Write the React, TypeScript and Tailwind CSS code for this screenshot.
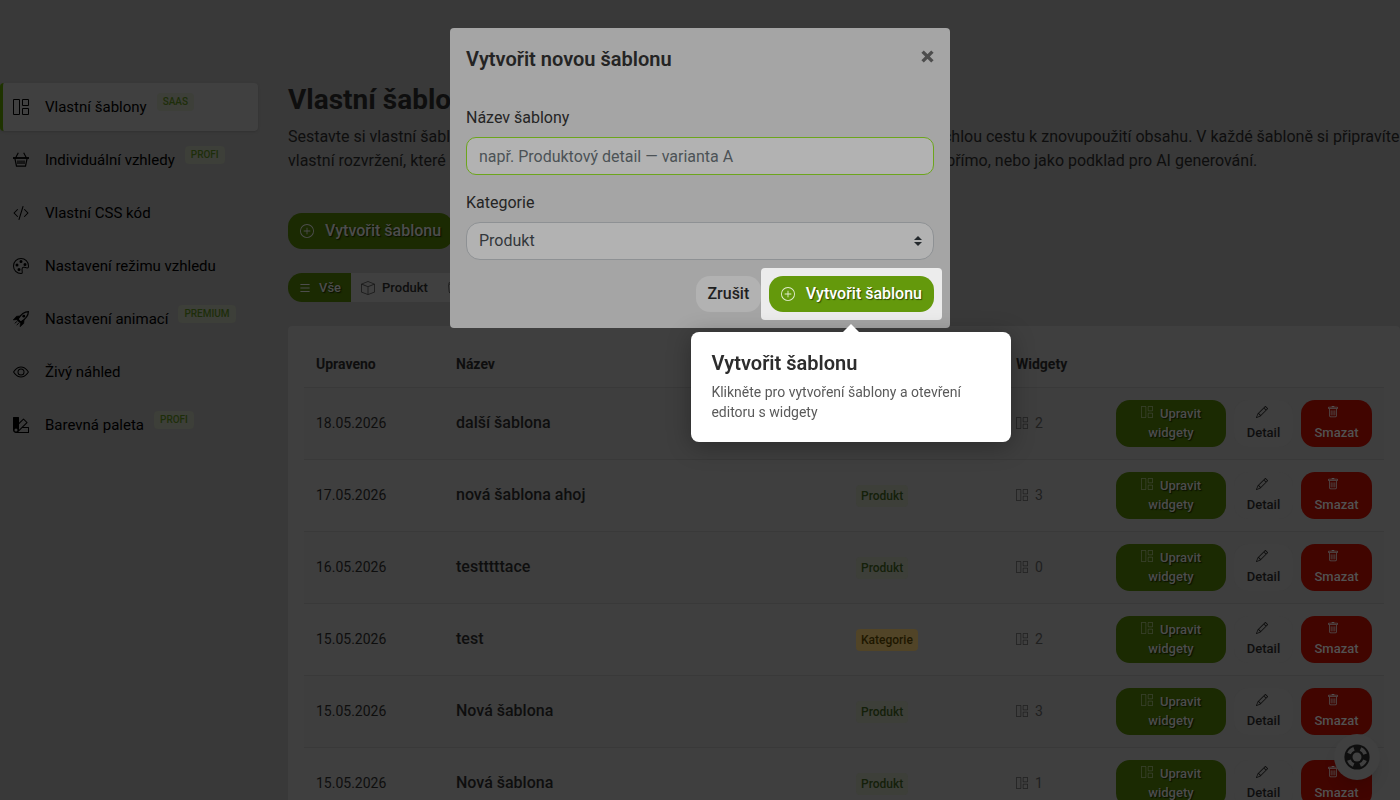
import type { ReactNode } from "react";
import {
  BsBox,
  BsCodeSlash,
  BsEye,
  BsFolder,
  BsGrid1X2,
  BsList,
  BsPalette,
  BsPalette2,
  BsPencil,
  BsPlusCircle,
  BsTrash,
} from "react-icons/bs";

type MenuItem = {
  label: string;
  icon: ReactNode;
  badge?: string;
  active?: boolean;
};

type Template = {
  date: string;
  name: string;
  type: "Produkt" | "Kategorie";
  widgets: number;
};

function BasketIcon() {
  return (
    <svg viewBox="0 0 16 16" className="w-4 h-4" fill="none" stroke="currentColor">
      <path d="M5.300.8 2.800 5.500M10.700.8l2.500 4.700" strokeWidth="1.100" />
      <path d="M0 6h16" strokeWidth="1.800" />
      <path d="M1.900 6.500l1.600 7.700h9l1.600-7.700" strokeWidth="1.200" />
      <path d="M5 8.500v3.500M7 8.500v3.500M9 8.500v3.500M11 8.500v3.500" strokeWidth="1.200" />
    </svg>
  );
}

function RocketIcon() {
  return (
    <svg viewBox="0 0 16 16" className="w-4 h-4" fill="none" stroke="currentColor">
      <path d="M15.400.6C11.400.6 8.300 2.600 4.900 8.200l2.900 2.900C13.400 7.700 15.400 4.600 15.400.6z" strokeWidth="1.200" />
      <circle cx="10.800" cy="5.200" r="1.400" fill="currentColor" stroke="none" />
      <path d="M6.800 4.900 3.500 5.300.2 8.900l4.700-.5zM11.100 9.200l-.4 3.300-3.600 3.300.5-4.700z" fill="currentColor" strokeWidth=".6" />
      <path d="M4.900 8.200l2.900 2.900-1 1-2.900-2.900z" fill="currentColor" stroke="none" />
      <path d="M3.900 10.300 2 12.300M5.800 12.200l-2.100 1.800" />
    </svg>
  );
}

function LifebuoyIcon() {
  return (
    <svg viewBox="0 0 26 26" className="w-[26px] h-[26px]" fill="none">
      <circle cx="13" cy="13" r="12.600" fill="#0e0e0e" />
      <circle cx="13" cy="13" r="8.700" stroke="#404040" strokeWidth="3.800" strokeDasharray="7 6.670" strokeDashoffset="-3.330" />
      <circle cx="13" cy="13" r="4.500" fill="#404040" />
    </svg>
  );
}

const menu: MenuItem[] = [
  { label: "Vlastní šablony", icon: <BsGrid1X2 />, badge: "SAAS", active: true },
  { label: "Individuální vzhledy", icon: <BasketIcon />, badge: "PROFI" },
  { label: "Vlastní CSS kód", icon: <BsCodeSlash /> },
  { label: "Nastavení režimu vzhledu", icon: <BsPalette /> },
  { label: "Nastavení animací", icon: <RocketIcon />, badge: "PREMIUM" },
  { label: "Živý náhled", icon: <BsEye /> },
  { label: "Barevná paleta", icon: <BsPalette2 />, badge: "PROFI" },
];

const templates: Template[] = [
  { date: "18.05.2026", name: "další šablona", type: "Produkt", widgets: 2 },
  { date: "17.05.2026", name: "nová šablona ahoj", type: "Produkt", widgets: 3 },
  { date: "16.05.2026", name: "testttttace", type: "Produkt", widgets: 0 },
  { date: "15.05.2026", name: "test", type: "Kategorie", widgets: 2 },
  { date: "15.05.2026", name: "Nová šablona", type: "Produkt", widgets: 3 },
  { date: "15.05.2026", name: "Nová šablona", type: "Produkt", widgets: 1 },
];

function Sidebar() {
  return (
    <nav className="w-[258px] shrink-0 flex flex-col gap-[5px]">
      {menu.map((item) => (
        <a
          key={item.label}
          href="#"
          className={`h-12 flex items-center pl-[10px] border-l-[3px] rounded text-[15px] text-black ${
            item.active ? "bg-[#404040] border-[#1e3300] shadow-sm" : "border-transparent"
          }`}
        >
          <span className="w-4 mr-4 text-base">{item.icon}</span>
          {item.label}
          {item.badge && (
            <span className="ml-[10px] mb-[10px] px-1.5 rounded bg-[#3d3f39] text-[#1d2e0a] text-[10px] leading-[18px] font-medium">
              {item.badge}
            </span>
          )}
        </a>
      ))}
    </nav>
  );
}

function TypeFilter() {
  return (
    <div className="mt-6 flex w-max h-[29px] rounded-[14px] overflow-hidden bg-[#404040] text-[13px] font-medium text-[#0e0e0e]">
      <button className="flex items-center px-[10px] gap-[7px] bg-[#1b2a02] text-[#4d4d4d] [text-shadow:1px_1px_1px_#0a1000]">
        <BsList className="w-[14px] h-[14px]" />
        Vše
      </button>
      <button className="flex items-center px-[10px] gap-[7px]">
        <BsBox className="w-[14px] h-[14px] text-[#1c1c1c]" />
        Produkt
      </button>
      <button className="flex items-center px-[10px] gap-[7px]">
        <BsFolder className="w-[14px] h-[14px] text-[#1c1c1c]" />
        Kategorie
      </button>
    </div>
  );
}

function TemplateRow({ template }: { template: Template }) {
  return (
    <tr className="h-[72px] border-t border-[#393939] odd:bg-[#3e3e3e]">
      <td className="px-3 text-sm">{template.date}</td>
      <td className="px-3 text-base font-medium">{template.name}</td>
      <td className="px-3">
        <span
          className={`inline-block px-[5px] rounded text-xs leading-[22px] font-medium ${
            template.type === "Kategorie" ? "bg-[#514427] text-[#1e1700]" : "bg-[#3d3f39] text-[#14200a]"
          }`}
        >
          {template.type}
        </span>
      </td>
      <td className="px-3 text-sm text-[#202020]">
        <span className="flex items-center gap-[7px]">
          <BsGrid1X2 className="w-3 h-3" />
          {template.widgets}
        </span>
      </td>
      <td className="px-3">
        <div className="flex gap-2 text-[13px] leading-[19px] font-medium">
          <button className="h-[47px] w-[110px] px-4 rounded-[14px] bg-[#1b2a02] text-[#4d4d4d] [text-shadow:1px_1px_1px_#0a1000]">
            <BsGrid1X2 className="inline align-baseline w-3 h-3 mr-[7px] text-[#3c4330]" />
            Upravit widgety
          </button>
          <button className="h-[47px] w-[59px] rounded-[14px] bg-[#3f3f3f] text-[#0e0e0e]">
            <BsPencil className="inline align-baseline w-3 h-3 mr-1" />
            <br />
            Detail
          </button>
          <button className="h-[47px] w-[71px] rounded-[14px] bg-[#410500] text-[#525252]">
            <BsTrash className="inline align-baseline w-3 h-3 mr-2" />
            <br />
            Smazat
          </button>
        </div>
      </td>
    </tr>
  );
}

function TemplateTable() {
  return (
    <section className="mt-6 p-4 rounded bg-[#3f3f3f]">
      <table className="w-full table-fixed text-left text-[#0e0e0e]">
        <thead>
          <tr className="h-[45px] text-sm">
            <th className="w-[140px] px-3">Upraveno</th>
            <th className="px-3">Název</th>
            <th className="w-[160px] px-3">Typ</th>
            <th className="w-[100px] px-3">Widgety</th>
            <th className="w-[280px] px-3"></th>
          </tr>
        </thead>
        <tbody>
          {templates.map((template, i) => (
            <TemplateRow key={i} template={template} />
          ))}
        </tbody>
      </table>
    </section>
  );
}

function TourPopover() {
  return (
    <div className="absolute top-full left-1/2 -translate-x-1/2 mt-5 w-80 h-[110px] px-5 pt-[18px] rounded-lg bg-white shadow-[0_4px_24px_rgba(0,0,0,0.3)]">
      <span className="absolute -top-2 left-1/2 -translate-x-1/2 border-x-8 border-b-8 border-x-transparent border-b-white"></span>
      <h3 className="text-xl leading-[26px] font-semibold text-[#2d2d2d]">Vytvořit šablonu</h3>
      <p className="mt-1.5 text-sm font-normal text-[#5a5a5a]">
        Klikněte pro vytvoření šablony a otevření editoru s widgety
      </p>
    </div>
  );
}

function CreateModal() {
  return (
    <div className="fixed inset-0 flex justify-center items-start pt-7">
      <div role="dialog" aria-labelledby="modal-title" className="w-[500px] h-[300px] p-4 rounded bg-[#a5a5a5] text-[#242424]">
        <div className="flex justify-between items-start">
          <h2 id="modal-title" className="text-xl leading-[30px] font-semibold">
            Vytvořit novou šablonu
          </h2>
          <button aria-label="Zavřít" className="mt-1.5 text-[#4d4d4d]">
            <svg viewBox="0 0 13 13" className="w-[13px] h-[13px]" stroke="currentColor" strokeWidth="3.400">
              <path d="M1.600 1.600l9.800 9.800M11.400 1.600l-9.800 9.800" />
            </svg>
          </button>
        </div>
        <label htmlFor="template-name" className="block mt-8 mb-[7px]">
          Název šablony
        </label>
        <input
          id="template-name"
          placeholder="např. Produktový detail — varianta A"
          className="block w-full h-[38px] px-3 rounded-[10px] border border-[#6ca51c] bg-[#b2b2b2] placeholder:text-[#4c5256] outline-none"
        />
        <label htmlFor="template-type" className="block mt-4 mb-[7px]">
          Kategorie
        </label>
        <div className="relative">
          <select
            id="template-type"
            className="block w-full h-[38px] px-3 rounded-[14px] border border-[#8e9194] bg-[#b2b2b2] text-[#32373b] appearance-none"
          >
            <option>Produkt</option>
            <option>Kategorie</option>
          </select>
          <svg viewBox="0 0 4 5" className="absolute right-3 top-[14px] w-2 h-[10px] pointer-events-none" fill="#24292d">
            <path d="M2 0L0 2h4zm0 5L0 3h4z" />
          </svg>
        </div>
        <div className="mt-4 flex justify-end gap-2 font-medium">
          <button className="h-9 w-[65px] rounded-[14px] bg-[#b2b2b2] text-[#1f1f1f]">Zrušit</button>
          <div className="relative">
            <div className="absolute -inset-2 rounded bg-[#ececec]"></div>
            <button className="relative h-9 px-3 flex items-center gap-[11px] rounded-[14px] bg-[#64990c] text-white [text-shadow:1px_1px_1px_#2f4a04]">
              <BsPlusCircle className="w-[14px] h-[14px] text-[#e4eed2]" />
              Vytvořit šablonu
            </button>
            <TourPopover />
          </div>
        </div>
      </div>
    </div>
  );
}

export default function App() {
  return (
    <div className="h-screen overflow-hidden bg-[#393939] font-[Roboto,sans-serif] text-[#0e0e0e]">
      <div className="flex gap-[30px] pt-[83px]">
        <Sidebar />
        <main className="flex-1 min-w-0">
          <h1 className="text-[28px] leading-[34px] font-bold">Vlastní šablony</h1>
          <p className="mt-2">
            Sestavte si vlastní šablony popisů z předpřipravených widgetů a získejte na svoje produkty rychlou cestu k znovupoužití obsahu. V každé šabloně si připravíte
            vlastní rozvržení, které můžete následně aplikovat na produktů a kategorií v administraci buď přímo, nebo jako podklad pro AI generování.
          </p>
          <button className="mt-10 h-9 px-3 flex items-center gap-[11px] rounded-[14px] bg-[#1b2a02] text-[#4d4d4d] font-medium [text-shadow:1px_1px_1px_#0a1000]">
            <BsPlusCircle className="w-[14px] h-[14px]" />
            Vytvořit šablonu
          </button>
          <TypeFilter />
          <TemplateTable />
        </main>
      </div>
      <button
        aria-label="Nápověda"
        className="fixed right-5 bottom-5 w-[46px] h-[46px] flex items-center justify-center rounded-full bg-[#404040] shadow-lg"
      >
        <LifebuoyIcon />
      </button>
      <CreateModal />
    </div>
  );
}
